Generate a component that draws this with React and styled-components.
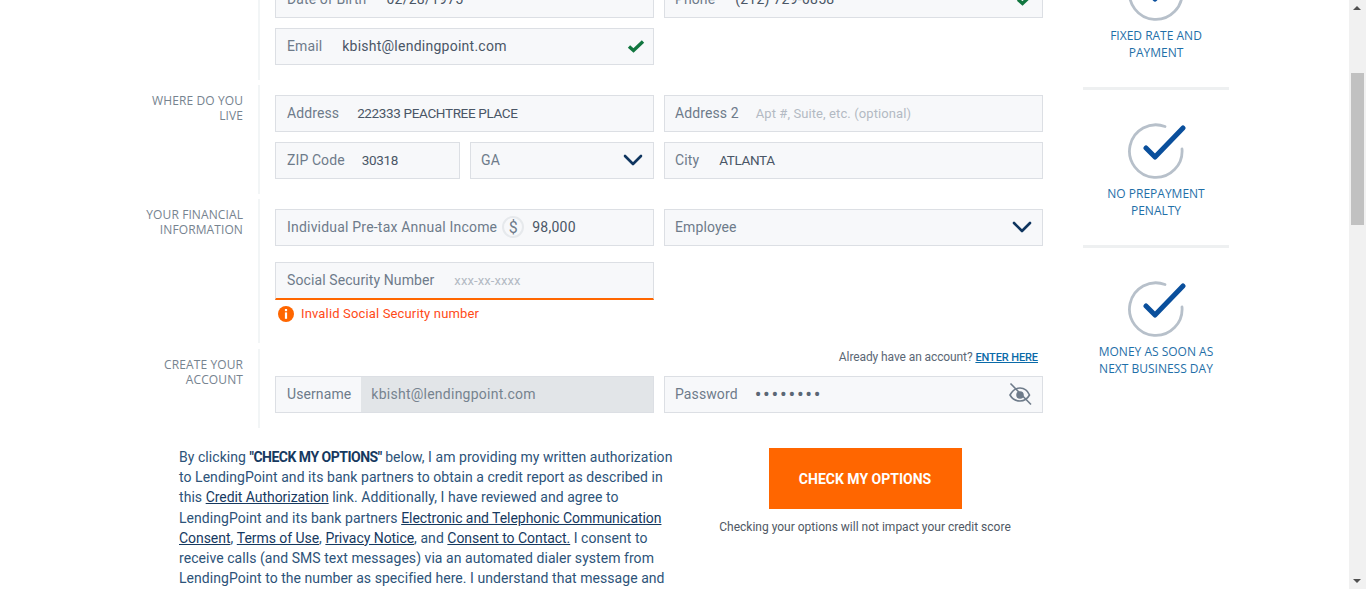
import React from 'react';
import styled, { createGlobalStyle } from 'styled-components';

const GlobalStyle = createGlobalStyle`
  html, body { margin: 0; padding: 0; height: 100%; overflow: hidden; background: #fff; }
  body { font-family: Roboto, "Open Sans", sans-serif; font-size: 14px; }
`;

const Viewport = styled.div`
  display: flex;
  height: 589px;
  overflow: hidden;
`;

// the page is scrolled down in the picture, so the content starts above the fold
const Content = styled.div`
  flex: 1;
  min-width: 0;
  overflow: hidden;
`;

const Page = styled.div`
  display: flex;
  gap: 40px;
  margin-top: -68px;
  padding-left: 130px;
`;

const FormColumn = styled.div`
  width: 913px;
  padding-top: 39px;
`;

const Section = styled.section`
  display: flex;
  margin-bottom: ${p => p.$gap || 5}px;
`;

const SectionLabel = styled.h3`
  width: 114px;
  margin: 8px 15px 0 0;
  font-family: "Open Sans", sans-serif;
  font-size: 12px;
  font-weight: 400;
  line-height: 15px;
  letter-spacing: 0.1px;
  text-align: right;
  text-transform: uppercase;
  color: #76838f;
`;

const SectionBody = styled.div`
  flex: 1;
  display: flex;
  flex-direction: column;
  gap: 10px;
  padding: 10px 0 ${p => p.$bottom || 15}px 15px;
  border-left: 2px solid #f2f5f6;
`;

const Row = styled.div`
  display: grid;
  grid-template-columns: 379px 379px;
  gap: 10px;
`;

const HalfRow = styled.div`
  display: grid;
  grid-template-columns: 185px 184px;
  gap: 10px;
`;

const Field = styled.div`
  display: flex;
  align-items: center;
  box-sizing: border-box;
  height: ${p => p.$height || 37}px;
  padding: 0 0 1px ${p => (p.$tight ? 10 : 11)}px;
  background: #f7f8fa;
  border: 1px solid #dcdfe4;
  border-bottom: ${p => (p.$error ? '2px solid #ff6600' : '1px solid #dcdfe4')};
  font-size: 14px;
  letter-spacing: 0.25px;
  white-space: nowrap;
`;

const FieldLabel = styled.span`
  color: #6e7b8a;
  letter-spacing: ${p => p.$track || 0.1}px;
  margin-right: ${p => p.$gap || 20}px;
`;

const Value = styled.span`
  flex: 1;
  color: #4a5666;
  font-size: ${p => (p.$caps ? '13.5px' : '14px')};
  letter-spacing: ${p => (p.$caps ? '-0.35px' : '0.25px')};
`;

const SelectText = styled.span`
  flex: 1;
  color: #6e7b8a;
  letter-spacing: 0.1px;
`;

const PasswordDots = styled.span`
  flex: 1;
  color: #5b6775;
  font-size: 20px;
  line-height: 20px;
  letter-spacing: 1.7px;
`;

const Placeholder = styled.span`
  flex: 1;
  color: #b3bac3;
  font-size: 13px;
  letter-spacing: 0.1px;
`;

const TrailingIcon = styled.span`
  display: flex;
  margin-right: ${p => p.$right || 10}px;
`;

const DisabledValue = styled.span`
  align-self: stretch;
  flex: 1;
  display: flex;
  align-items: center;
  margin-bottom: -1px;
  padding: 0 0 1px 10px;
  background: #e2e5e8;
  color: #76838f;
`;

const DollarBadge = styled.span`
  display: flex;
  align-items: center;
  justify-content: center;
  box-sizing: border-box;
  width: 22px;
  height: 22px;
  margin: 0 8px 0 -15px;
  border: 2px solid #e6e9ec;
  border-radius: 50%;
  color: #6e7b8a;
  font-size: 16px;
  letter-spacing: 0;
`;

const ErrorBlock = styled.div`
  margin-top: 6px;
  display: flex;
  flex-direction: column;
  gap: 5px;
`;

const ErrorText = styled.div`
  display: flex;
  align-items: center;
  gap: 7px;
  padding-left: 3px;
  font-size: 13px;
  line-height: 17px;
  letter-spacing: 0.15px;
  color: #ff4a17;
`;

const AccountNote = styled.div`
  margin: -10px 5px 0 0;
  font-size: 12px;
  line-height: 16px;
  letter-spacing: -0.1px;
  color: #5b6775;
  text-align: right;
  a { color: #0a6aa8; font-size: 11px; font-weight: 500; }
`;

const Agreement = styled.div`
  display: flex;
  padding: 18px 0 0 49px;
`;

const Legal = styled.p`
  width: 520px;
  margin: 0;
  font-size: 14px;
  line-height: 20.2px;
  letter-spacing: 0.05px;
  color: #2d5379;
  white-space: nowrap;
  b { color: #16395f; font-weight: 700; letter-spacing: -0.5px; }
  a { color: #16395f; letter-spacing: -0.05px; text-decoration: underline; }
`;

const Action = styled.div`
  width: 330px;
  margin-left: 1px;
  padding-top: 1px;
  display: flex;
  flex-direction: column;
  align-items: center;
`;

const CheckButton = styled.button`
  width: 193px;
  height: 61px;
  border: 0;
  background: #ff6600;
  color: #fff;
  font-family: inherit;
  font-size: 14px;
  font-weight: 700;
`;

const ActionNote = styled.div`
  margin-top: 10px;
  font-size: 12px;
  line-height: 16px;
  color: #4f5864;
`;

const Sidebar = styled.aside`
  width: 146px;
`;

const Benefit = styled.div`
  display: flex;
  flex-direction: column;
  align-items: center;
  box-sizing: border-box;
  height: 158px;
  padding-top: 31px;
  border-bottom: ${p => (p.$last ? '0' : '3px solid #eef0f1')};
`;

const BenefitIcon = styled.svg`
  margin-left: -1px;
`;

const BenefitText = styled.div`
  margin-top: 4px;
  font-family: "Open Sans", sans-serif;
  font-size: 12px;
  line-height: 17.3px;
  text-align: center;
  text-transform: uppercase;
  color: #1f6fa8;
`;

const Scrollbar = styled.div`
  width: 17px;
  flex: none;
  position: relative;
  background: #f1f1f1;
`;

const Thumb = styled.div`
  width: 13px;
  height: 152px;
  margin: 73px 2px 0;
  background: #c1c1c1;
`;

const Arrow = styled.div`
  position: absolute;
  left: 4px;
  ${p => (p.$down ? 'bottom: 6px;' : 'top: 6px;')}
  width: 0;
  height: 0;
  border-left: 4px solid transparent;
  border-right: 4px solid transparent;
  ${p => (p.$down ? 'border-top' : 'border-bottom')}: 4px solid #505050;
`;

const Check = () => (
  <svg width="18" height="14" viewBox="0 0 18 14" fill="none">
    <path d="M2 7.5 L6.5 11.5 L16 2.5" stroke="#11763f" strokeWidth="3.4" />
  </svg>
);

const Chevron = () => (
  <svg width="20" height="12" viewBox="0 0 20 12" fill="none">
    <path d="M2 2 L10 10 L18 2" stroke="#0f355f" strokeWidth="2.6" strokeLinecap="round" strokeLinejoin="round" />
  </svg>
);

const EyeOff = () => (
  <svg width="24" height="24" viewBox="0 0 24 24" fill="none" stroke="#6e7b8a" strokeWidth="1.6">
    <path d="M2 13 C5 7.5 9 6 12 6 C16 6 19.5 8 21.5 13 C19 17.5 15.5 19 12 19 C8 19 4.5 17.5 2 13 Z" />
    <circle cx="12" cy="13" r="3" fill="#6e7b8a" />
    <path d="M2.5 1.5 L23 22.5" />
  </svg>
);

const InfoIcon = () => (
  <svg width="16" height="16" viewBox="0 0 16 16">
    <circle cx="8" cy="8" r="8" fill="#ff6600" />
    <rect x="6.9" y="3" width="2.2" height="2.2" fill="#fff" />
    <rect x="6.9" y="6.4" width="2.2" height="6.4" fill="#fff" />
  </svg>
);

const CircleCheck = () => (
  <BenefitIcon width="60" height="60" viewBox="0 0 60 60" fill="none">
    <path d="M39 5.5 A26.3 26.3 0 1 0 56 28" stroke="#b7c0ca" strokeWidth="2.8" strokeLinecap="round" />
    <path d="M20 27 L29 36 L57 7" stroke="#0a4f9c" strokeWidth="5" strokeLinecap="round" strokeLinejoin="round" />
  </BenefitIcon>
);

const benefits = [
  ['Fixed rate and', 'payment'],
  ['No prepayment', 'penalty'],
  ['Money as soon as', 'next business day'],
];

export default function App() {
  return (
    <Viewport>
      <GlobalStyle />
      <Content>
        <Page>
          <FormColumn>
            <Section>
              <SectionLabel />
              <SectionBody>
                <Row>
                  <Field>
                    <FieldLabel>Date of Birth</FieldLabel>
                    <Value>02/28/1975</Value>
                  </Field>
                  <Field $tight>
                    <FieldLabel>Phone</FieldLabel>
                    <Value>(212) 729-0858</Value>
                    <TrailingIcon $right={8}><Check /></TrailingIcon>
                  </Field>
                </Row>
                <Row>
                  <Field>
                    <FieldLabel>Email</FieldLabel>
                    <Value>kbisht@lendingpoint.com</Value>
                    <TrailingIcon $right={8}><Check /></TrailingIcon>
                  </Field>
                </Row>
              </SectionBody>
            </Section>

            <Section>
              <SectionLabel>Where do you<br />live</SectionLabel>
              <SectionBody>
                <Row>
                  <Field>
                    <FieldLabel $gap={18}>Address</FieldLabel>
                    <Value $caps>222333 PEACHTREE PLACE</Value>
                  </Field>
                  <Field $tight>
                    <FieldLabel $gap={17}>Address 2</FieldLabel>
                    <Placeholder>Apt #, Suite, etc. (optional)</Placeholder>
                  </Field>
                </Row>
                <Row>
                  <HalfRow>
                    <Field>
                      <FieldLabel $gap={17}>ZIP Code</FieldLabel>
                      <Value $caps>30318</Value>
                    </Field>
                    <Field $tight>
                      <SelectText>GA</SelectText>
                      <TrailingIcon><Chevron /></TrailingIcon>
                    </Field>
                  </HalfRow>
                  <Field $tight>
                    <FieldLabel>City</FieldLabel>
                    <Value $caps>ATLANTA</Value>
                  </Field>
                </Row>
              </SectionBody>
            </Section>

            <Section $gap={6}>
              <SectionLabel>Your financial<br />information</SectionLabel>
              <SectionBody $bottom={21}>
                <Row>
                  <Field>
                    <FieldLabel $track={0.2}>Individual Pre-tax Annual Income</FieldLabel>
                    <DollarBadge>$</DollarBadge>
                    <Value>98,000</Value>
                  </Field>
                  <Field $tight>
                    <SelectText>Employee</SelectText>
                    <TrailingIcon><Chevron /></TrailingIcon>
                  </Field>
                </Row>
                <ErrorBlock>
                  <Row>
                    <Field $height={38} $error>
                      <FieldLabel>Social Security Number</FieldLabel>
                      <Placeholder>xxx-xx-xxxx</Placeholder>
                    </Field>
                  </Row>
                  <ErrorText><InfoIcon />Invalid Social Security number</ErrorText>
                </ErrorBlock>
              </SectionBody>
            </Section>

            <Section $gap={1}>
              <SectionLabel>Create your<br />account</SectionLabel>
              <SectionBody>
                <AccountNote>Already have an account? <a href="#enter">ENTER HERE</a></AccountNote>
                <Row>
                  <Field>
                    <FieldLabel $gap={10}>Username</FieldLabel>
                    <DisabledValue>kbisht@lendingpoint.com</DisabledValue>
                  </Field>
                  <Field $tight>
                    <FieldLabel $gap={17}>Password</FieldLabel>
                    <PasswordDots>••••••••</PasswordDots>
                    <TrailingIcon><EyeOff /></TrailingIcon>
                  </Field>
                </Row>
              </SectionBody>
            </Section>

            <Agreement>
              <Legal>
                By clicking <b>"CHECK MY OPTIONS"</b> below, I am providing my written authorization<br />
                to LendingPoint and its bank partners to obtain a credit report as described in<br />
                this <a href="#credit">Credit Authorization</a> link. Additionally, I have reviewed and agree to<br />
                LendingPoint and its bank partners <a href="#electronic">Electronic and Telephonic Communication</a><br />
                <a href="#electronic">Consent</a>, <a href="#terms">Terms of Use</a>, <a href="#privacy">Privacy Notice</a>, and <a href="#contact">Consent to Contact.</a> I consent to<br />
                receive calls (and SMS text messages) via an automated dialer system from<br />
                LendingPoint to the number as specified here. I understand that message and
              </Legal>
              <Action>
                <CheckButton>CHECK MY OPTIONS</CheckButton>
                <ActionNote>Checking your options will not impact your credit score</ActionNote>
              </Action>
            </Agreement>
          </FormColumn>

          <Sidebar>
            {benefits.map((lines, i) => (
              <Benefit key={lines[0]} $last={i === benefits.length - 1}>
                <CircleCheck />
                <BenefitText>{lines[0]}<br />{lines[1]}</BenefitText>
              </Benefit>
            ))}
          </Sidebar>
        </Page>
      </Content>
      <Scrollbar>
        <Arrow />
        <Thumb />
        <Arrow $down />
      </Scrollbar>
    </Viewport>
  );
}
